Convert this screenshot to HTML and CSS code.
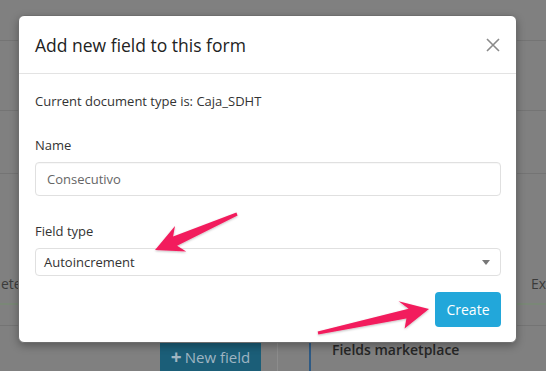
FILE: index.html
```html
<!DOCTYPE html>
<html lang="en">
<head>
  <meta charset="UTF-8">
  <title>Add new field</title>
  <link rel="stylesheet" href="styles.css">
</head>
<body>
  <!-- page behind the backdrop -->
  <div class="page">
    <div class="bar bar-top"></div>
    <div class="bar bar-sub"></div>
    <div class="bar bar-mid"></div>
    <div class="bar bar-tabs">
      <span class="tab">ete</span>
      <span class="tab">Ex</span>
    </div>
    <div class="bar bar-green"></div>
    <div class="bar bar-bottom">
      <div class="new-field"><span class="plus">+</span> New field</div>
      <div class="divider"></div>
      <div class="market">Fields marketplace</div>
    </div>
  </div>

  <div class="modal">
    <div class="modal-header">
      <div class="modal-title">Add new field to this form</div>
      <svg class="close" width="14" height="14" viewBox="0 0 14 14">
        <path d="M1 1 L13 13 M13 1 L1 13" stroke="#8a8a8a" stroke-width="1.6" fill="none"/>
      </svg>
    </div>
    <div class="modal-body">
      <p class="doc-type">Current document type is: Caja_SDHT</p>
      <label class="label label-name">Name</label>
      <div class="input">Consecutivo</div>
      <label class="label label-type">Field type</label>
      <div class="select">
        <span>Autoincrement</span>
        <span class="caret"></span>
      </div>
      <div class="footer">
        <button class="button create-button">Create</button>
      </div>
    </div>
  </div>

  <svg class="arrows" width="546" height="371" viewBox="0 0 546 371">
    <defs>
      <filter id="shade" x="-20%" y="-20%" width="140%" height="140%">
        <feDropShadow dx="0" dy="1" stdDeviation="1" flood-color="#000" flood-opacity="0.25"/>
      </filter>
    </defs>
    <polygon filter="url(#shade)" fill="#f21d5d"
      points="155,250 175,225.9 173.1,236.6 236.4,212.6 237.6,215.4 177.1,245.8 186.2,251.5"/>
    <polygon filter="url(#shade)" fill="#f21d5d"
      points="429,309 404.6,328.6 406.4,318.5 318.3,334.5 317.7,331.5 408.6,308.7 398.6,301.2"/>
  </svg>
</body>
</html>
```

FILE: styles.css
```css
/* General reset */
* {
  margin: 0;
  padding: 0;
  box-sizing: border-box;
}

body {
  width: 546px;
  height: 371px;
  overflow: hidden;
  background-color: #808080;
  font-family: "Open Sans", "Liberation Sans", sans-serif;
  color: #333;
  position: relative;
}

/* Dimmed page behind the modal */
.page {
  display: flex;
  flex-direction: column;
  height: 100%;
}

.bar {
  border-bottom: 1px solid #747474;
}

.bar-top {
  height: 41px;
}

.bar-sub {
  height: 70px;
}

.bar-mid {
  height: 63px;
}

.bar-tabs {
  height: 131px;
  display: flex;
  justify-content: space-between;
  align-items: flex-end;
  padding: 0 0 10px 1px;
  border-bottom: 2px solid #7a8777;
  font-size: 14px;
  color: #3b3b3b;
}

.bar-green {
  height: 21px;
}

/* Bottom strip: button, divider, marketplace heading */
.bar-bottom {
  flex: 1;
  border-bottom: none;
  display: flex;
  padding-left: 160px;
  padding-top: 17px;
}

.new-field {
  width: 101px;
  background-color: #1b5e78;
  color: #9fb5c2;
  font-size: 15px;
  display: flex;
  align-items: center;
  justify-content: center;
  gap: 3px;
}

.plus {
  font-weight: bold;
  font-size: 19px;
}

.divider {
  width: 1px;
  margin-left: 16px;
  margin-top: -17px;
  background-color: #8c8c8c;
}

.market {
  margin-left: 31px;
  margin-top: -17px;
  padding: 14px 0 0 21px;
  border-left: 2px solid #2e5a84;
  font-size: 14px;
  font-weight: 600;
  color: #262626;
}

/* Modal */
.modal {
  position: absolute;
  top: 15px;
  left: 18px;
  width: 499px;
  background-color: #fff;
  border-radius: 6px;
  border: 1px solid #6e6e6e;
  box-shadow: 0 3px 9px rgba(0, 0, 0, 0.3);
}

.modal-header {
  height: 58px;
  padding: 0 16px;
  border-bottom: 1px solid #e3e3e3;
  display: flex;
  align-items: center;
  justify-content: space-between;
}

.modal-title {
  font-size: 17.5px;
  color: #222;
  margin-top: 1px;
}

.modal-body {
  padding: 17px 15px 15px 16px;
  display: flex;
  flex-direction: column;
}

.doc-type {
  font-size: 13px;
  line-height: 20px;
  color: #333;
}

.label {
  font-size: 13px;
  line-height: 20px;
  color: #333;
  margin-bottom: 7px;
}

.label-name {
  margin-top: 24px;
}

.label-type {
  margin-top: 25px;
}

.input {
  height: 34px;
  border: 1px solid #e0e0e0;
  border-radius: 4px;
  padding: 0 11px;
  display: flex;
  align-items: center;
  font-size: 13px;
  color: #666;
  box-shadow: inset 0 1px 1px rgba(0, 0, 0, 0.03);
}

.select {
  height: 28px;
  border: 1px solid #e0e0e0;
  border-radius: 4px;
  padding: 0 8px;
  display: flex;
  align-items: center;
  justify-content: space-between;
  font-size: 13px;
  color: #333;
}

.caret {
  width: 0;
  height: 0;
  border-left: 4px solid transparent;
  border-right: 4px solid transparent;
  border-top: 5px solid #777;
  margin-right: 2px;
}

.footer {
  display: flex;
  justify-content: flex-end;
  margin-top: 16px;
}

.button {
  border: none;
  border-radius: 4px;
  font-family: inherit;
  cursor: pointer;
}

.create-button {
  width: 66px;
  height: 35px;
  background-color: #22a7da;
  color: #fff;
  font-size: 14px;
}

/* Annotation arrows over everything */
.arrows {
  position: absolute;
  top: 0;
  left: 0;
  pointer-events: none;
}
```
